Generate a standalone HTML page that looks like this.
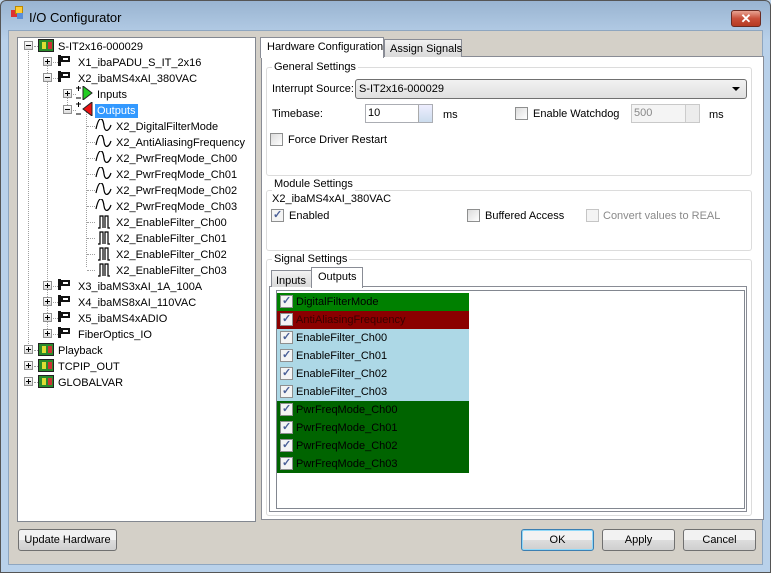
<!DOCTYPE html>
<html><head><style>
*{margin:0;padding:0;box-sizing:border-box}
body{width:771px;height:573px;position:relative;overflow:hidden;font-family:"Liberation Sans",sans-serif;font-size:11px;color:#000;background:#bcd3ea}
.a{position:absolute}
.t{position:absolute;white-space:nowrap;line-height:14px}
.frame{left:0;top:0;width:771px;height:573px;background:linear-gradient(#99b4d1,#b9d1ea 40px,#b9d1ea);border:1px solid #555;border-radius:6px 6px 0 0}
.body{left:8px;top:30px;width:755px;height:535px;background:#d4d0c8;border:1px solid #8ea6c0}
.tree{left:17px;top:37px;width:239px;height:485px;background:#fff;border:1px solid #828790}
.exp{position:absolute;width:9px;height:9px;border:1px solid #919191;background:linear-gradient(#fff,#dcdcdc)}
.exp:before{content:"";position:absolute;left:1px;top:3px;width:5px;height:1px;background:#000}
.exp.p:after{content:"";position:absolute;left:3px;top:1px;width:1px;height:5px;background:#000}
.dv{position:absolute;border-left:1px dotted #a0a0a0}
.dh{position:absolute;border-top:1px dotted #a0a0a0}
.grp{position:absolute;border:1px solid #dcdcdc;border-radius:3px}
.gl{position:absolute;background:#fff;padding:0 2px;line-height:13px}
.cb{position:absolute;width:13px;height:13px;border:1px solid #8e8f8f;background:linear-gradient(135deg,#dcdcdc,#fff)}
.btn{position:absolute;height:22px;border:1px solid #707070;border-radius:3px;background:linear-gradient(#f2f2f2 50%,#dddddd 50%,#cfcfcf);text-align:center;line-height:20px}
.row{position:absolute;left:277px;width:192px;height:18px}
.row .cb{left:3px;top:2px;background:#f4f4f4;border-color:#8e8f8f}
.ck:after{content:"\2713";position:absolute;left:1px;top:-2px;font-size:11px;color:#4a5f97;font-weight:bold;line-height:14px}
.row span{position:absolute;left:19px;top:2px;line-height:14px}
</style></head><body>
<div class="a frame"></div>
<div class="a" style="left:11px;top:10px;width:7px;height:7px;background:#d33"></div>
<div class="a" style="left:15px;top:6px;width:8px;height:8px;background:#fc3;border:1px solid #b80"></div>
<div class="a" style="left:17px;top:13px;width:6px;height:6px;background:#5b8fd8"></div>
<div class="t" style="left:29px;top:11px;font-size:13px">I/O Configurator</div>
<div class="a" style="left:731px;top:10px;width:30px;height:17px;border:1px solid #6b2b22;border-radius:3px;background:linear-gradient(#e8a493,#c9503a 50%,#b63a22);color:#fff;font-weight:bold;text-align:center;line-height:15px;font-size:13px">✕</div>
<div class="a body"></div>

<div class="a tree"></div>
<div class="dv" style="left:28px;top:47px;height:305px"></div>
<div class="dv" style="left:47px;top:61px;height:274px"></div>
<div class="dv" style="left:67px;top:93px;height:14px"></div>
<div class="dv" style="left:86px;top:111px;height:156px"></div>
<div id="tr"></div>
<script>
var rows=[
[0,1,0,"S-IT2x16-000029","g"],[1,0,1,"X1_ibaPADU_S_IT_2x16","f"],[1,1,0,"X2_ibaMS4xAI_380VAC","f"],
[2,0,1,"Inputs","in"],[2,1,0,"Outputs","out"],
[3,0,-1,"X2_DigitalFilterMode","s"],[3,0,-1,"X2_AntiAliasingFrequency","s"],[3,0,-1,"X2_PwrFreqMode_Ch00","s"],[3,0,-1,"X2_PwrFreqMode_Ch01","s"],[3,0,-1,"X2_PwrFreqMode_Ch02","s"],[3,0,-1,"X2_PwrFreqMode_Ch03","s"],
[3,0,-1,"X2_EnableFilter_Ch00","d"],[3,0,-1,"X2_EnableFilter_Ch01","d"],[3,0,-1,"X2_EnableFilter_Ch02","d"],[3,0,-1,"X2_EnableFilter_Ch03","d"],
[1,0,1,"X3_ibaMS3xAI_1A_100A","f"],[1,0,1,"X4_ibaMS8xAI_110VAC","f"],[1,0,1,"X5_ibaMS4xADIO","f"],[1,0,1,"FiberOptics_IO","f"],
[0,0,1,"Playback","g"],[0,0,1,"TCPIP_OUT","g"],[0,0,1,"GLOBALVAR","g"]];
var ex=[24,43,63,82],ic=[38,58,76,95],tx=[58,78,97,116],h="";
rows.forEach(function(r,i){var y=42+i*16,l=r[0];
if(r[2]>=0)h+='<div class="exp'+(r[2]?' p':'')+'" style="left:'+ex[l]+'px;top:'+(y-1)+'px"></div><div class="dh" style="left:'+(ex[l]+10)+'px;top:'+(y+4)+'px;width:'+(ic[l]-ex[l]-10)+'px"></div>';
else h+='<div class="dh" style="left:87px;top:'+(y+4)+'px;width:8px"></div>';
var x=ic[l];
if(r[4]=="g")h+='<div class="a" style="left:'+x+'px;top:'+(y-3)+'px;width:16px;height:13px;background:#2a8a2a;border:1px solid #222"><div class="a" style="left:3px;top:2px;width:4px;height:7px;background:#dd3"></div><div class="a" style="left:9px;top:2px;width:4px;height:7px;background:#c33"></div></div>';
if(r[4]=="f")h+='<div class="a" style="left:'+x+'px;top:'+(y-3)+'px;width:3px;height:11px;background:#111"></div><div class="a" style="left:'+(x+3)+'px;top:'+(y-2)+'px;width:9px;height:6px;border:2px solid #111"></div>';
if(r[4]=="in"||r[4]=="out")h+='<svg class="a" style="left:'+x+'px;top:'+(y-4)+'px" width="6" height="14"><path d="M0 2H5M2.5 0V5M0 12H5" stroke="#000" stroke-width="1"/></svg><svg class="a" style="left:'+(x+5)+'px;top:'+(y-4)+'px" width="12" height="14"><polygon points="'+(r[4]=="in"?'2,0 11,7 2,14':'11,0 2,7 11,14')+'" fill="'+(r[4]=="in"?'#22cc22':'#ee1111')+'" stroke="#222" stroke-width="1"/></svg>';
if(r[4]=="s")h+='<svg class="a" style="left:'+x+'px;top:'+(y-3)+'px" width="18" height="14"><path d="M1 10 C4 -4 8 -2 9 7 C10 14 14 12 16 6" fill="none" stroke="#000" stroke-width="1.2"/></svg>';
if(r[4]=="d")h+='<svg class="a" style="left:'+(x+2)+'px;top:'+(y-3)+'px" width="14" height="14"><path d="M1 13 H3 V1 H6 V13 M8 13 V1 H11 V13 H13" fill="none" stroke="#000" stroke-width="1.2"/></svg>';
var sel=r[4]=="out";
h+='<div class="t" style="left:'+(tx[l]-(sel?2:0))+'px;top:'+(y-2)+'px;'+(sel?'background:#3399ff;color:#fff;padding:0 2px;':'')+'">'+r[3]+'</div>';});
document.getElementById("tr").innerHTML=h;
</script>

<div class="a" style="left:261px;top:56px;width:503px;height:464px;background:#fff;border:1px solid #898c95"></div>
<div class="a" style="left:260px;top:37px;width:124px;height:21px;background:#fff;border:1px solid #898c95;border-bottom:none"></div>
<div class="t" style="left:267px;top:40px">Hardware Configuration</div>
<div class="a" style="left:384px;top:39px;width:78px;height:18px;background:linear-gradient(#f2f2f2,#d9d9d9);border:1px solid #898c95;border-bottom:none"></div>
<div class="t" style="left:390px;top:42px">Assign Signals</div>

<div class="grp" style="left:266px;top:67px;width:486px;height:109px"></div>
<div class="gl" style="left:272px;top:61px">General Settings</div>
<div class="t" style="left:272px;top:82px">Interrupt Source:</div>
<div class="a" style="left:355px;top:79px;width:392px;height:20px;border:1px solid #707070;border-radius:3px;background:linear-gradient(#f2f2f2,#e0e0e0)"></div>
<div class="t" style="left:359px;top:82px">S-IT2x16-000029</div>
<div class="a" style="left:732px;top:87px;border:4px solid transparent;border-top:4px solid #000;border-bottom:none"></div>
<div class="t" style="left:272px;top:107px">Timebase:</div>
<div class="a" style="left:365px;top:104px;width:68px;height:19px;border:1px solid #abadb3;background:#fff"></div>
<div class="t" style="left:368px;top:106px">10</div>
<div class="a" style="left:418px;top:105px;width:14px;height:17px;background:linear-gradient(#eef,#cde);border-left:1px solid #aaa"></div>
<div class="t" style="left:443px;top:108px">ms</div>
<div class="cb" style="left:515px;top:107px"></div>
<div class="t" style="left:533px;top:107px">Enable Watchdog</div>
<div class="a" style="left:631px;top:104px;width:69px;height:19px;border:1px solid #c9c9c9;background:#f4f4f4"></div>
<div class="t" style="left:634px;top:106px;color:#888">500</div>
<div class="a" style="left:685px;top:105px;width:14px;height:17px;background:#ececec;border-left:1px solid #ccc"></div>
<div class="t" style="left:709px;top:108px">ms</div>
<div class="cb" style="left:270px;top:133px"></div>
<div class="t" style="left:288px;top:133px">Force Driver Restart</div>

<div class="grp" style="left:266px;top:190px;width:486px;height:61px"></div>
<div class="gl" style="left:272px;top:178px">Module Settings</div>
<div class="t" style="left:272px;top:192px">X2_ibaMS4xAI_380VAC</div>
<div class="cb ck" style="left:271px;top:209px;background:#f4f4f4"></div>
<div class="t" style="left:289px;top:209px">Enabled</div>
<div class="cb" style="left:467px;top:209px"></div>
<div class="t" style="left:485px;top:209px">Buffered Access</div>
<div class="cb" style="left:586px;top:209px;border-color:#c5c5c5;background:#f4f4f4"></div>
<div class="t" style="left:603px;top:209px;color:#8a8a8a">Convert values to REAL</div>

<div class="grp" style="left:266px;top:259px;width:486px;height:257px"></div>
<div class="gl" style="left:272px;top:253px">Signal Settings</div>
<div class="a" style="left:269px;top:286px;width:478px;height:226px;border:1px solid #898c95;background:#fff"></div>
<div class="a" style="left:271px;top:270px;width:41px;height:17px;background:linear-gradient(#f2f2f2,#d9d9d9);border:1px solid #898c95;border-bottom:none"></div>
<div class="t" style="left:276px;top:274px">Inputs</div>
<div class="a" style="left:311px;top:267px;width:52px;height:21px;background:#fff;border:1px solid #898c95;border-bottom:none"></div>
<div class="t" style="left:318px;top:270px">Outputs</div>
<div class="a" style="left:276px;top:290px;width:469px;height:219px;border:1px solid #828790"></div>
<div id="ls"></div>
<script>
var L=[["DigitalFilterMode","#008000"],["AntiAliasingFrequency","#8b0000"],["EnableFilter_Ch00","#add8e6"],["EnableFilter_Ch01","#add8e6"],["EnableFilter_Ch02","#add8e6"],["EnableFilter_Ch03","#add8e6"],["PwrFreqMode_Ch00","#006400"],["PwrFreqMode_Ch01","#006400"],["PwrFreqMode_Ch02","#006400"],["PwrFreqMode_Ch03","#006400"]],s="";
L.forEach(function(r,i){s+='<div class="row" style="top:'+(293+i*18)+'px;background:'+r[1]+'"><div class="cb ck"></div><span'+(i==1?' style="color:#3a0000"':'')+'>'+r[0]+'</span></div>';});
document.getElementById("ls").innerHTML=s;
</script>

<div class="btn" style="left:18px;top:529px;width:99px">Update Hardware</div>
<div class="btn" style="left:521px;top:529px;width:73px;border-color:#3c7fb1;box-shadow:inset 0 0 0 1px #8fd8f8">OK</div>
<div class="btn" style="left:602px;top:529px;width:73px">Apply</div>
<div class="btn" style="left:683px;top:529px;width:73px">Cancel</div>
</body></html>
